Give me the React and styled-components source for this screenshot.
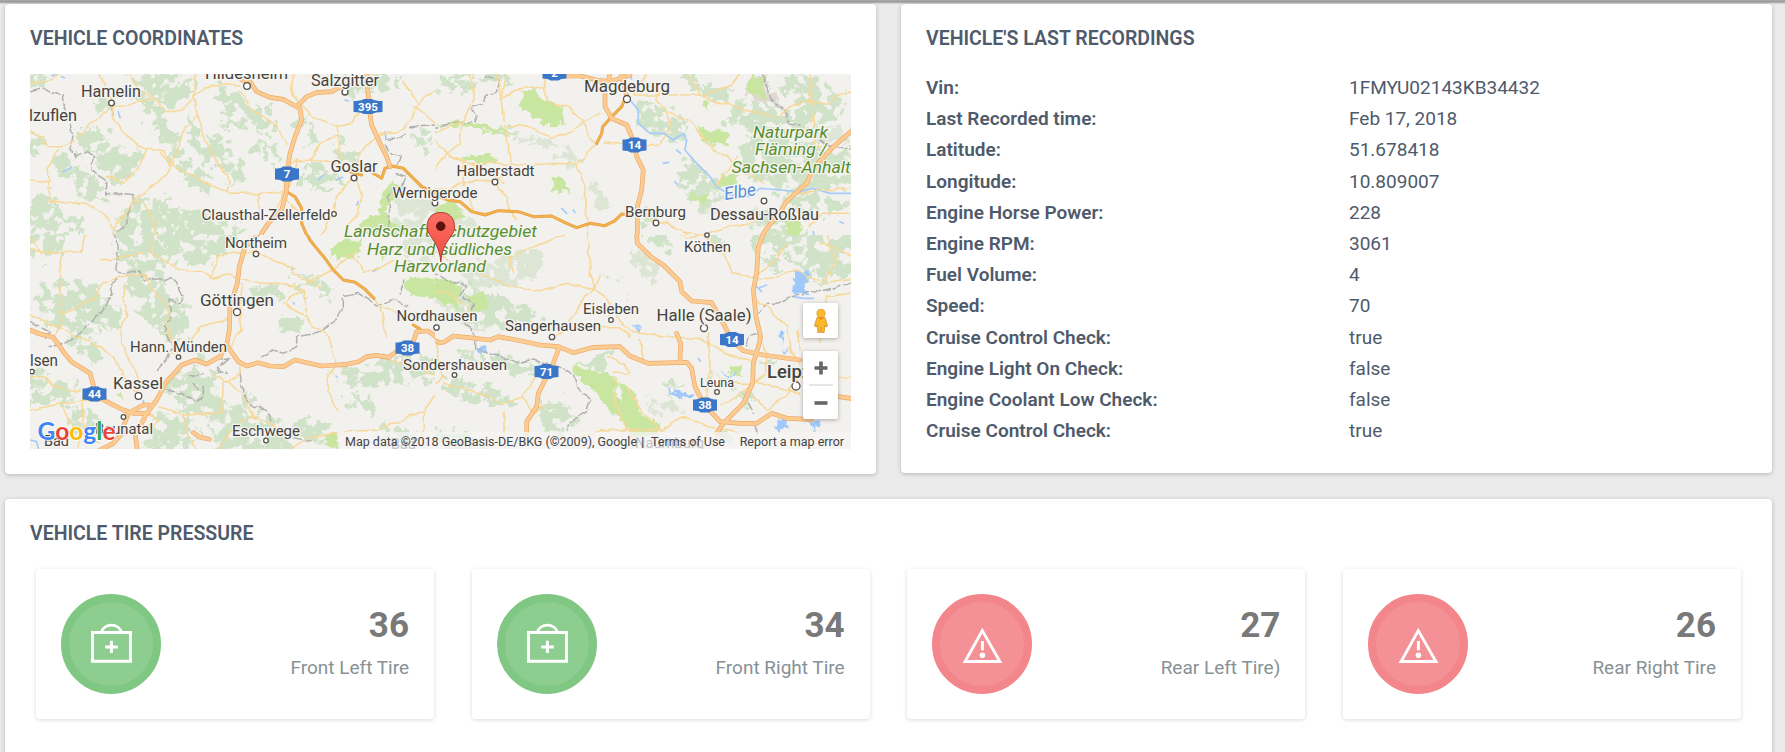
import React from "react";
import styled, { createGlobalStyle } from "styled-components";

const GlobalStyle = createGlobalStyle`
  * { box-sizing: border-box; }
  html, body { margin: 0; padding: 0; height: 100%; overflow: hidden; }
  body {
    background: #eaeaea;
    color: #4f5a6b;
    font-family: Roboto, "Liberation Sans", sans-serif;
    font-size: 19px;
  }
`;

const Page = styled.main`
  height: 752px;
  overflow: hidden;
  display: flex;
  flex-direction: column;
`;

const HeaderEdge = styled.div`
  flex: none;
  height: 4px;
  background: linear-gradient(#a8a8a8 0 1px, #9b9b9b 1px 2px, #b3b3b3 2px 3px, #d2d2d2 3px 4px);
`;

const Content = styled.div`
  flex: 1;
  display: grid;
  grid-template-columns: 871px 871px;
  grid-template-rows: 470px 300px;
  gap: 25px;
  padding: 0 13px 0 5px;
  align-items: start;
`;

const Card = styled.section`
  grid-column: ${(p) => (p.$wide ? "1 / -1" : "auto")};
  width: ${(p) => (p.$wide ? "1767px" : "auto")};
  min-height: ${(p) => (p.$wide ? "300px" : "0")};
  padding: 25px;
  border-radius: 4px;
  background: #fff;
  box-shadow: 0 1px 4px rgba(0, 0, 0, 0.22);
`;

const Title = styled.h2`
  margin: 0 0 25px;
  font-size: 19.5px;
  line-height: 20px;
  font-weight: 600;
  text-transform: uppercase;
`;

const MapFrame = styled.div`
  position: relative;
  height: 375px;
  overflow: hidden;
  background: #f2f1ed;
`;

const MapSvg = styled.svg`
  display: block;
  font-family: Roboto, sans-serif;
`;

const MapControls = styled.div`
  position: absolute;
  top: 229px;
  right: 13px;
  display: flex;
  flex-direction: column;
  gap: 13px;
`;

const ControlBox = styled.div`
  width: 35px;
  height: ${(p) => p.$height}px;
  display: flex;
  flex-direction: column;
  align-items: center;
  justify-content: center;
  background: #fff;
  border-radius: 2px;
  box-shadow: 0 1px 4px rgba(0, 0, 0, 0.3);
`;

const ZoomKey = styled.div`
  height: 33px;
  display: flex;
  align-items: center;
`;

const ControlRule = styled.div`
  width: 24px;
  height: 2px;
  background: #e6e6e6;
`;

const Attribution = styled.div`
  position: absolute;
  right: 0;
  bottom: 0;
  width: 513px;
  height: 17px;
  padding: 2px 7px 0 7px;
  display: grid;
  grid-template-columns: 296px 10px 1fr auto;
  font-size: 12.5px;
  line-height: 15px;
  color: #444;
  white-space: pre;
  background: rgba(245, 245, 245, 0.72);
`;

const Record = styled.div`
  display: grid;
  grid-template-columns: 423px 1fr;
  height: 31.2px;
  line-height: 28px;
`;

const RecordLabel = styled.span`
  font-weight: 600;
`;

const Tires = styled.div`
  display: flex;
  justify-content: space-between;
  padding: 0 6px;
`;

const TireCard = styled.article`
  width: 398px;
  height: 150px;
  padding: 25px;
  display: flex;
  justify-content: space-between;
  border-radius: 4px;
  background: #fff;
  box-shadow: 0 1px 4px rgba(0, 0, 0, 0.15);
`;

const Badge = styled.div`
  width: 100px;
  height: 100px;
  border-radius: 50%;
  background: ${(p) => (p.$alert ? "#f39196" : "#8dcd8f")};
  border: 8px solid ${(p) => (p.$alert ? "#f3868b" : "#80c783")};

  svg {
    display: block;
    margin: -8px;
  }
`;

const Reading = styled.div`
  padding-top: 11px;
  text-align: right;
`;

const Value = styled.div`
  font-size: 35px;
  line-height: 42px;
  font-weight: 700;
  color: #797979;
`;

const Caption = styled.div`
  margin-top: 7px;
  line-height: 28px;
  color: #879196;
`;

const records = [
  ["Vin:", "1FMYU02143KB34432"],
  ["Last Recorded time:", "Feb 17, 2018"],
  ["Latitude:", "51.678418"],
  ["Longitude:", "10.809007"],
  ["Engine Horse Power:", "228"],
  ["Engine RPM:", "3061"],
  ["Fuel Volume:", "4"],
  ["Speed:", "70"],
  ["Cruise Control Check:", "true"],
  ["Engine Light On Check:", "false"],
  ["Engine Coolant Low Check:", "false"],
  ["Cruise Control Check:", "true"],
];

const tires = [
  { value: 36, name: "Front Left Tire", alert: false },
  { value: 34, name: "Front Right Tire", alert: false },
  { value: 27, name: "Rear Left Tire)", alert: true },
  { value: 26, name: "Rear Right Tire", alert: true },
];

/* Map artwork: four tiles, each drawn at three units per pixel. */
const tiles = [
  {
    at: [0, 0],
    forest: [
      "M400 222 L520 225 530 260 570 240 575 280 550 300 500 310 470 290 430 270Z",
      "M410 290 L450 300 480 340 500 380 540 410 520 430 480 400 440 350Z",
      "M570 360 L600 400 640 450 700 490 740 520 720 550 670 510 620 480 570 420Z",
      "M510 430 L540 450 580 500 640 540 620 570 570 550 520 490Z",
      "M650 260 L700 280 760 310 800 330 830 370 800 400 740 370 680 370 660 340 690 330 650 290Z",
      "M890 370 L920 350 950 410 920 430Z",
      "M180 450 L230 480 250 520 220 545 170 510Z",
      "M230 400 L290 380 330 400 310 440 370 450 430 460 400 520 350 550 300 500 260 440Z",
      "M280 310 L315 290 330 320 290 340Z",
      "M90 400 L130 430 120 460 90 470Z",
      "M90 600 L150 580 190 640 240 680 200 720 150 690 90 700Z",
      "M380 610 L460 590 520 610 540 660 560 720 380 720 350 690Z",
      "M520 640 L600 630 650 660 720 690 720 720 520 720Z",
      "M770 430 L830 440 840 480 790 480Z",
      "M1000 230 L1080 250 1110 280 1050 290Z",
      "M1240 400 L1280 400 1290 440 1250 440Z",
      "M1000 420 L1060 450 1080 490 1020 470Z",
      "M930 480 L990 500 1010 560 960 570 900 540Z",
      "M1120 222 L1200 240 1190 270 1140 260Z",
      "M90 230 L160 225 140 240 90 260Z",
      "M220 520 L290 540 310 590 270 600 230 570Z",
      "M640 420 L680 440 710 500 660 490Z",
    ],
    pale: ["M1160 600 L1250 570 1310 610 1310 720 1180 700Z"],
    park: ["M1150 570 L1180 540 1220 570 1160 620 1170 660 1230 690 1210 720 1090 700 1080 670 1140 640Z"],
    minor: [
      "M90 250 L150 240 180 222 M300 222 L335 310 340 350 380 410 430 445 490 455 520 495 560 520 620 550 690 580 780 580 860 575",
      "M90 395 L125 410 140 440 185 440 225 420 285 360 330 325 375 315 460 295 500 335 550 325 580 295 610 265 660 255 720 255",
      "M385 222 L420 270 460 295 M590 222 L585 300 595 345 545 400 535 450 515 495 500 525 430 580 395 605 375 640 345 680 340 720",
      "M595 345 L610 410 650 480 690 540 685 575 M720 270 L745 320 790 350 830 380 860 430",
      "M90 540 L150 545 140 500 180 450 M145 545 L150 600 200 610 260 610 305 635 340 680",
      "M880 222 L875 270 890 310 M900 310 L940 350 1010 380 1060 370 1090 310 M1010 380 L1020 420 1025 500 1050 520",
      "M1310 270 L1270 290 1230 360 1190 400 1140 400 M1240 320 L1310 370 M1210 240 L1255 310",
      "M870 485 L930 480 980 485 1030 500 M930 480 L960 430 1015 405 M1150 400 L1095 440 1060 500 1085 590 1075 640 1040 680",
      "M820 640 L870 555 890 480 M860 600 L900 640 M400 600 L430 610 450 640 470 720 M1050 540 L1010 590 1000 640 980 680 950 720",
      "M320 530 L370 545 420 500 435 450 M515 500 L480 460 M780 580 L780 640",
    ],
    trunk: ["M860 575 L885 590 905 625 905 670 920 705 935 725", "M1050 515 L1085 525 M1120 520 L1145 535 1155 505 1175 498 1210 505 1235 530 1265 560 1310 580"],
    highway: ["M725 240 L750 245 770 275 810 292 850 298 880 315 900 325 905 360 885 410 870 460 862 510 858 580 845 630 805 670 785 700 775 725", "M890 320 L920 290 950 278 995 275 1030 255", "M1100 222 L1108 330 1115 375 1140 430 1160 470 1170 500"],
    water: ["M190 515 L215 502", "M155 228 l10 -5 M185 230 l8 3 M335 325 l5 20 M355 335 l5 18", "M955 540 l15 -15 M1008 540 l20 -8", "M1035 300 l10 3 M1155 395 l3 25 M1075 605 l-5 10"],
    border: ["M95 275 L130 265 160 280 190 285 185 310 205 340 210 390 220 400 210 450 230 470 260 455 280 470 275 510 320 540 320 585 370 580 405 585 385 630 380 670 345 705 345 725", "M1230 380 L1315 378 M1160 415 L1200 415 1215 400 M1155 435 L1180 465 1205 470 1195 490 M1190 520 L1215 530 1205 560 1165 590 1170 640 1165 690"],
  },
  {
    at: [430, 0],
    forest: [
      "M0 225 L80 230 130 260 100 280 40 260 0 245Z",
      "M130 225 L210 222 240 240 180 250 150 240Z",
      "M620 310 L690 330 760 350 770 390 720 420 660 400 625 360Z",
      "M760 230 L830 250 900 270 880 300 800 280Z",
      "M930 300 L1040 320 1090 340 1130 300 1150 350 1110 410 1000 410 950 380 890 360Z",
      "M1060 230 L1180 240 1240 300 1220 350 1150 370 1120 300 1070 290Z",
      "M770 480 L810 500 850 550 880 580 860 620 790 610 760 560Z",
      "M950 420 L1100 410 1150 450 1260 450 1262 550 1150 570 1000 550 930 500Z",
      "M960 620 L1030 640 1100 650 1140 720 1020 720 980 680Z",
      "M1050 580 L1180 590 1240 620 1180 640 1060 620Z",
      "M200 400 L230 380 260 400Z M640 620 L660 650 640 680Z",
    ],
    pale: [
      "M260 400 L370 420 430 450 450 500 420 500 370 460 270 430Z",
      "M495 540 L520 570 540 610 500 620 470 580Z",
      "M780 500 L840 550 870 610 820 640 760 590Z",
      "M0 620 L90 630 170 680 260 690 200 720 0 720Z",
      "M1150 380 L1260 390 1262 430 1150 430Z",
    ],
    park: [
      "M275 270 L310 270 350 310 400 320 400 380 330 370 310 350 275 335Z",
      "M0 375 L60 368 130 365 210 388 260 400 180 400 120 380Z",
      "M90 465 L170 465 210 480 170 490 100 485Z",
      "M360 570 L375 540 400 540 420 575Z",
      "M805 380 L840 390 900 400 890 435 820 425Z",
      "M870 520 L925 525 915 560 870 560Z",
      "M770 580 L830 590 830 620Z",
      "M1060 660 L1110 670 1100 720 1070 720Z",
      "M960 225 L1000 230 1010 300 950 280Z",
      "M815 300 L840 305 830 330Z",
      "M0 620 L70 610 110 650 50 670 0 690Z",
    ],
    urban: ["M945 235 L1010 225 1040 310 1000 315 960 280Z"],
    minor: [
      "M0 400 L90 370 M95 370 L90 430 50 460 0 405 M50 460 L100 490 100 560 M0 580 L20 500 50 460 M100 490 L240 490 M225 550 L160 510 50 460",
      "M120 222 L130 300 95 370 M200 222 L215 310 225 380 245 490 195 550 140 540 90 550 40 580",
      "M225 380 L290 380 370 415 420 395 460 365 510 340 M460 365 L470 400 500 430 440 495 380 490 280 495 245 490",
      "M215 295 L260 270 340 260 350 300 410 320 460 360 M350 222 L345 260 M520 430 L570 432 600 420 M650 438 L690 435 720 370 710 330 680 300 690 270",
      "M650 222 L610 285 815 285 900 260 930 222 M770 222 L815 285 840 300 920 320 1000 345 1050 350 1080 320 1140 300 1190 310 1262 270",
      "M720 340 L780 365 830 430 890 470 950 520 1000 550 M1140 222 L1145 300 1155 380 1150 440 1190 430",
      "M440 495 L465 560 470 640 470 720 M0 560 L110 580 140 640 180 640 M195 550 L230 590 245 640 260 660",
      "M660 660 L710 670 760 700 830 705 M830 705 L900 680 1000 660 M1090 580 L1190 570 1262 565 M920 470 L900 500 860 560",
      "M450 720 L400 710 370 720 M1140 680 L1180 640 1262 640 M760 700 L790 720 M225 222 L215 290",
    ],
    trunk: ["M590 285 L575 320 545 350 518 380 515 400 500 430", "M0 580 L55 600 90 605 125 635 165 645 205 632 265 635 310 650 365 648 405 668 440 683 480 670 525 677 555 662 575 642 600 645"],
    highway: ["M540 222 L525 280 525 320 545 355 590 375 610 420 620 470 640 510 635 570 622 620 622 700 618 720", "M410 228 L450 228 500 240 540 245 600 225 M575 222 L590 290", "M1262 395 L1210 440 1150 505 1130 550 1095 580 1065 610 1050 640 1010 685 990 720"],
    water: ["M600 300 L625 330 625 370 660 400 700 400 730 420 760 400 770 420 765 450 800 490 840 530 860 560 900 585 960 590 990 565 1050 570 1110 575 1150 565 1200 580 1262 580", "M600 222 l5 15 M740 450 l12 10 M700 490 l15 -3 M735 545 l8 10", "M395 625 l15 15 M430 630 l5 8 M1150 695 l3 25 M1230 665 l10 5"],
    border: ["M170 230 L205 240 200 275 170 290 155 310 125 320 130 335 145 345 135 368 80 368 30 378 0 378", "M995 225 L1010 250 1030 310 1060 330 1080 370 1110 375 M1170 415 L1200 440 1262 450"],
  },
  {
    at: [0, 230],
    forest: [
      "M90 0 L190 0 180 50 140 90 90 60Z",
      "M370 -15 L560 -10 640 20 660 60 620 100 500 90 440 70 360 90 350 20Z",
      "M560 0 L700 10 680 70 640 60Z",
      "M380 100 L470 90 480 160 520 200 560 230 550 330 500 340 490 290 430 270 410 200 380 150Z",
      "M120 170 L210 160 300 180 300 220 200 240 230 280 170 290 110 230Z",
      "M240 230 L350 220 350 290 260 310 200 340Z",
      "M540 420 L620 430 650 480 640 540 560 550 520 500 500 450Z",
      "M230 340 L290 350 310 380 240 370Z",
      "M90 430 L170 450 230 470 200 510 90 520Z",
      "M450 560 L560 560 590 600 560 657 460 657 430 620Z",
      "M620 500 L700 530 770 560 790 657 650 657Z",
      "M770 560 L830 570 860 657 780 657Z",
      "M980 410 L1080 420 1130 400 1240 380 1310 400 1310 440 1200 450 1080 470 1020 440Z",
      "M1050 490 L1120 520 1100 540 1040 520Z",
      "M860 250 L920 270 880 310 840 290Z",
      "M880 130 L960 150 1000 190 980 200 900 170Z",
      "M740 180 L840 170 840 200 760 210Z",
      "M200 530 L270 540 300 580 220 600Z",
      "M880 570 L970 590 980 640 900 620Z",
      "M1140 600 L1210 590 1230 620 1150 630Z",
      "M600 360 L640 380 600 400Z M730 480 L760 500 740 530Z",
    ],
    pale: ["M1200 20 L1310 10 1310 90 1230 100Z"],
    park: ["M990 60 L1040 25 1090 30 1080 70 1010 100Z", "M1130 50 L1160 60 1150 100Z", "M1205 160 L1240 140 1310 145 1310 205 1260 200 1215 180Z", "M975 610 L1015 605 1015 655 980 650Z", "M350 490 L370 480 370 505Z"],
    minor: [
      "M90 60 L150 70 240 65 260 0 M180 60 L185 280 160 320 M190 250 L280 210 310 160 360 140 M90 255 L210 310 290 345 340 380 370 440 410 490",
      "M360 295 L375 370 410 430 430 480 M375 160 L370 220 385 260 360 295 M360 140 L430 130 460 180 500 230 510 260 490 280 540 370",
      "M90 440 L130 440 160 470 200 480 240 480 M90 540 L190 520 250 510 320 515 M245 490 L250 600 230 657 M180 530 L230 600 300 640",
      "M460 0 L450 60 500 100 540 120 610 125 640 145 690 130 720 145 780 160 860 160 910 180 920 250 940 290 980 310 1000 380 1010 405",
      "M860 220 L890 250 920 260 M630 145 L660 75 700 70 770 65 M770 70 L850 100 900 140 960 170 M520 370 L580 330 600 290 690 265",
      "M725 160 L720 300 690 360 M915 165 L1000 120 1070 60 M640 430 L680 460 720 430 720 400 M690 455 L740 510 760 560 M670 460 L665 550 550 555 480 530",
      "M550 560 L560 600 590 657 M870 657 L930 620 1010 607 1130 600 1200 575 1270 540 1310 490 M1010 410 L980 440 990 500 1010 540",
      "M650 657 L700 590 760 560 830 590 M1120 200 L1140 230 1180 240 1210 270 M1060 80 L1100 130 1180 90 M1270 540 L1270 630 M1320 440 L1240 410 1170 390",
      "M850 220 L870 200 910 180 M90 20 L120 70 M300 90 L370 80 430 70 M440 550 L480 570 450 600 M1140 230 L1160 320",
    ],
    trunk: ["M915 0 L930 30 950 55 975 85 1000 120 1030 150 1065 157 1095 178 1122 205", "M1240 285 L1260 297"],
    highway: ["M790 -10 L760 30 735 50 718 110 712 160 690 230 688 300 680 345 715 395 740 408 775 398 810 408 850 410 885 390 965 408 1040 403 1075 395 1100 380 1130 376 1165 382 1190 365 1215 350 1240 335 1250 305 1285 303 1325 335", "M680 345 L660 380 620 402 585 390 545 405 500 455 470 510 440 550 425 580", "M90 300 L120 312 160 322 190 365 215 395 270 430 280 465 285 490 320 515 370 540 400 550 445 550", "M430 525 L385 550 370 590 M430 525 L455 525 M375 600 L340 640 300 660 M405 610 L412 660", "M580 608 L600 622 628 628"],
    water: ["M90 630 l20 5 5 20 M1120 125 l15 -10 M880 218 l3 4 M1008 438 l3 3 M430 512 l2 8"],
    border: ["M345 0 L355 80 345 125 370 130 420 120 430 150 490 150 510 140 530 160 550 200 540 220 510 210 515 260 490 290 520 350 500 390 470 420", "M350 150 L330 165 335 190 310 240 240 310 200 335 150 350 M95 275 L130 295 150 300 140 325", "M780 380 L820 360 850 370 890 350 890 320 950 310 1010 270 1030 230 1030 200 1075 190 1130 225 1180 210 1220 230 M1200 190 L1215 150", "M570 440 L610 430 M580 460 L595 480 M500 480 L545 490 590 515 610 495 610 470 M665 390 L690 385 660 410 660 430 680 430", "M720 430 L730 490 760 530 800 540 820 580 M880 620 L930 632"],
  },
  {
    at: [430, 230],
    forest: [
      "M60 170 L160 180 250 220 330 260 280 290 200 280 140 260 110 240Z",
      "M40 440 L120 450 190 480 240 495 220 520 120 510 50 480Z",
      "M100 370 L210 375 280 400 370 420 380 450 300 440 210 400 120 390Z",
      "M320 520 L390 510 430 560 400 600 350 600Z",
      "M950 0 L1262 0 1262 120 1180 160 1120 150 1080 60 970 50Z",
      "M930 480 L960 470 980 500 940 520Z",
      "M640 0 L690 20 720 60 680 50Z",
      "M470 410 L540 360 520 400Z M700 460 L760 470 740 480Z",
      "M0 600 L120 620 160 657 0 657Z",
      "M980 400 L1040 390 1030 410Z M870 600 L920 640 900 657Z",
      "M1000 90 L1050 80 1040 130Z M850 20 L880 10 870 40Z",
    ],
    pale: [
      "M90 130 L240 60 310 50 350 70 340 120 250 170 120 190Z",
      "M600 60 L660 70 680 110 670 170 600 100Z",
      "M510 140 L580 135 570 150Z M580 170 L600 190 590 200Z",
      "M660 510 L740 500 760 530 720 550 670 540Z",
      "M0 190 L140 240 200 280 150 310 60 260Z M840 430 L930 450 900 480Z",
    ],
    park: [
      "M0 145 L60 150 90 170 80 210 90 240 0 205Z",
      "M110 200 L160 185 175 235 140 245Z",
      "M430 400 L450 400 480 425 540 430 560 450 550 500 600 520 630 550 690 580 680 610 590 620 600 590 550 555 500 490 440 440Z",
      "M560 450 L590 470 620 500 630 550 580 520Z",
      "M900 410 L935 415 930 440 900 430Z M630 0 L645 10 635 25Z",
      "M1070 0 L1110 0 1085 20Z",
    ],
    minor: [
      "M0 60 L60 90 150 130 240 170 320 185 410 160 490 175 525 200 560 260 600 300 700 320 800 325",
      "M470 0 L475 60 480 120 490 175 465 200 430 260 390 310 M250 130 L240 80 310 50 450 0",
      "M510 130 L490 175 M0 490 L40 440 30 400 20 340 M40 460 L150 490 220 520 280 500 320 430 M225 545 L225 657",
      "M280 500 L310 550 340 530 M380 310 L440 290 570 290 600 320 M550 430 L600 430 580 400 530 380",
      "M555 440 L555 520 590 600 560 657 M450 620 L520 600 590 600 700 600 760 560 840 590 930 610",
      "M590 470 L630 540 690 600 M835 310 L840 400 830 500 800 510 M800 325 L860 350 900 380 970 395",
      "M830 20 L880 70 910 130 970 145 M980 215 L1020 235 1070 290 1080 360 1110 400 M960 145 L1040 140 1100 120 1180 160 1262 145",
      "M1190 0 L1200 60 1220 90 1180 160 M1262 80 L1230 60 1170 40 M980 320 L1010 370 1010 430 960 460 890 460",
      "M970 450 L1040 470 1110 490 M970 500 L1010 540 1060 500 1110 440 M1225 445 L1262 445 M870 530 L960 470 1010 430",
      "M1100 300 L1110 360 M730 0 L770 20 830 15 M970 145 L1040 90 1070 40 M630 330 L640 390 M0 180 L60 190 120 240",
      "M1170 340 L1190 200 1262 190",
    ],
    highway: ["M618 -10 L622 40 665 82 700 105 750 155 755 185 785 213 845 218 880 280 905 330 940 362 1000 375 1110 390", "M0 325 L30 338 45 335 70 318 110 322 180 330 205 320 260 330 330 345 385 350 430 368 490 352 570 350 600 378 655 400 770 397 785 415 795 470 820 520 870 575 930 580 980 580 1025 550 1070 565 1145 568", "M740 310 L752 340 750 395", "M388 350 L370 400 350 440 325 490 320 530 290 575 290 610", "M1005 0 L985 50 980 130 970 180 978 260 992 320 985 350 970 400 968 460 940 520 880 580 860 610", "M1225 500 L1262 505 1290 520"],
    trunk: [],
    lake: ["M1080 150 L1095 140 1090 122 1110 120 1135 130 1135 160 1120 165 1125 190 1100 195 1090 175Z", "M715 475 L760 490 790 490 785 510 740 500Z", "M145 355 L170 350 175 365 155 372Z", "M1030 590 L1060 560 1080 590 1050 600 1040 610Z", "M875 420 L900 440 910 425 915 435 890 445Z", "M600 285 L640 300 620 302Z", "M1045 305 L1065 310 1060 335Z", "M1140 575 L1170 575 1150 600Z", "M1065 360 L1080 350 1075 365Z"],
    water: ["M1090 200 l30 5 30 0 M985 175 l25 -10 M805 385 l5 8 M975 165 l20 20 M735 480 l20 25"],
    border: ["M0 130 L60 155 110 165 90 200 130 220 110 280 140 320 140 360 210 380 270 400 310 390 390 415 430 430 440 470 480 510 470 545 420 575 415 600", "M1262 155 L1220 175 1170 185 1130 180 1120 195 1080 200 1040 220 1010 220 985 250 M985 310 L960 315 950 345 M955 520 L970 550 M975 590 L985 610"],
  },
];

/* text, x, baseline, size, width */
const towns = [
  ["Hildesheim", 205, 78.5, 16, 83],
  ["Salzgitter", 311, 86, 16, 68],
  ["Hamelin", 81, 96.5, 16, 60],
  ["lzuflen", 29, 121, 16, 48],
  ["Goslar", 330.5, 171.5, 16, 47],
  ["Clausthal-Zellerfeld", 201.5, 219.5, 15, 129],
  ["Wernigerode", 392.5, 198, 15, 85],
  ["Magdeburg", 584, 91.5, 17, 86],
  ["Halberstadt", 456.5, 176, 15, 78],
  ["Bernburg", 625, 217, 15.5, 61],
  ["Dessau-Roßlau", 710, 219.5, 16, 109],
  ["Northeim", 225, 248, 15.5, 62],
  ["Göttingen", 200, 305.5, 17, 74],
  ["Hann. Münden", 130, 351.5, 15, 97],
  ["lsen", 30, 366, 16, 28],
  ["Kassel", 113, 388.5, 17, 50],
  ["Eschwege", 232, 435.5, 15, 68],
  ["Baunatal", 95, 434, 15, 58],
  ["Bad", 44, 445.5, 15, 25],
  ["Bad", 391, 448.5, 15, 25],
  ["Köthen", 684, 252, 15, 47],
  ["Nordhausen", 396.5, 321, 15, 81],
  ["Sangerhausen", 505, 330.5, 15, 96],
  ["Eisleben", 583, 314, 15, 56],
  ["Halle (Saale)", 656.5, 321, 17, 95],
  ["Sondershausen", 403, 369.5, 15, 104],
  ["Leuna", 700, 387, 13, 34],
  ["Leipzig", 767, 377.5, 18.5, 59, 500],
  ["Naumburg", 635, 448, 15, 69],
];

const dots = [
  [247, 86, 3.3], [345, 92, 3], [111.5, 103, 2.8], [354, 178, 2.8], [334, 214, 2.3], [435, 203, 2.8],
  [627, 99, 3.5], [495, 182, 2.8], [656, 223, 2.8], [764, 201, 2.8], [707, 235, 2.2], [256, 254, 2.7],
  [237, 312, 3.5], [178.5, 357, 2.2], [32, 371.5, 2.2], [138.5, 396, 3.3], [123.5, 417, 2.3], [266, 440.5, 2.3],
  [436.5, 327.5, 2.7], [552, 337, 2.7], [611, 320, 2.3], [704, 328, 3.5], [454.5, 375, 2.3], [717, 392, 2.3],
  [796, 386, 4],
];

const shields = [
  ["395", 368, 106.5, 29], ["7", 287, 174, 24], ["2", 554.5, 73, 24], ["14", 634.5, 145, 24],
  ["44", 94.5, 394, 24], ["38", 407.5, 348, 24], ["71", 546.5, 371.5, 24], ["14", 732, 339.5, 24], ["38", 705, 405, 24],
];

const parks = [
  ["Landschaftsschutzgebiet", 344, 237, 193], ["Harz und südliches", 367, 255, 145], ["Harzvorland", 394, 272, 92],
  ["Naturpark", 753, 138, 75], ["Fläming /", 755, 155, 72], ["Sachsen-Anhalt", 731.5, 173, 119],
];

const join = (list) => (list || []).join(" ");

function Tile({ tile }) {
  return (
    <g transform={`translate(${tile.at[0]} ${tile.at[1]}) scale(0.33333)`} fill="none" strokeLinejoin="round" strokeLinecap="round">
      <g filter="url(#ragged)">
        <path d={join(tile.pale)} fill="#dde6d5" />
        <path d={join(tile.urban)} fill="#dfd9d0" />
        <path d={join(tile.forest)} fill="#d0e3c8" stroke="#d0e3c8" strokeWidth="12" />
      </g>
      <g filter="url(#soft)">
        <path d={join(tile.park)} fill="#c9e6a0" />
        <path d={join(tile.lake)} fill="#a0c8fa" />
      </g>
      <path d={join(tile.water)} stroke="#a6cbfa" strokeWidth="5" />
      <path d={join(tile.border)} stroke="#b0b0ae" strokeWidth="4.5" strokeDasharray="24 9" filter="url(#wobble)" />
      <path d={join(tile.minor)} stroke="#f8d898" strokeWidth="4.6" filter="url(#wobble)" />
      <path d={join(tile.trunk)} stroke="#e39a35" strokeWidth="9" />
      <path d={join(tile.trunk)} stroke="#f3b04f" strokeWidth="6" />
      <path d={join(tile.highway)} stroke="#eda968" strokeWidth="14" />
      <path d={join(tile.highway)} stroke="#fccb92" strokeWidth="10" />
    </g>
  );
}

function VehicleMap() {
  return (
    <MapSvg width="821" height="375" viewBox="30 74 821 375">
      <defs>
        <filter id="ragged" x="-5%" y="-5%" width="110%" height="110%" colorInterpolationFilters="sRGB">
          <feTurbulence type="fractalNoise" baseFrequency="0.03" numOctaves="4" seed="7" result="n" />
          <feDisplacementMap in="SourceGraphic" in2="n" scale="75" xChannelSelector="R" yChannelSelector="G" result="d" />
          <feColorMatrix in="n" type="matrix" values="0 0 0 0 0  0 0 0 0 0  0 0 0 0 0  0 0 18 0 -7" result="holes" />
          <feComposite in="d" in2="holes" operator="in" />
        </filter>
        <filter id="soft" x="-5%" y="-5%" width="110%" height="110%" colorInterpolationFilters="sRGB">
          <feTurbulence type="fractalNoise" baseFrequency="0.04" numOctaves="3" seed="3" result="n" />
          <feDisplacementMap in="SourceGraphic" in2="n" scale="36" xChannelSelector="R" yChannelSelector="G" />
        </filter>
        <filter id="wobble" x="-5%" y="-5%" width="110%" height="110%" colorInterpolationFilters="sRGB">
          <feTurbulence type="fractalNoise" baseFrequency="0.025" numOctaves="2" seed="5" result="n" />
          <feDisplacementMap in="SourceGraphic" in2="n" scale="18" xChannelSelector="R" yChannelSelector="G" />
        </filter>
        <linearGradient id="pin" x1="0" y1="0" x2="0" y2="1">
          <stop offset="0" stopColor="#fb7064" />
          <stop offset="1" stopColor="#f24a3e" />
        </linearGradient>
        {tiles.map((t, i) => (
          <clipPath id={`tile${i}`} key={i}>
            <rect x={t.at[0] ? 435 : 0} y={t.at[1] ? 235 : 0} width={t.at[0] ? 450 : 435} height={t.at[1] ? 230 : 235} />
          </clipPath>
        ))}
      </defs>
      <rect x="30" y="74" width="821" height="375" fill="#f2f1ed" />
      {tiles.map((t, i) => (
        <g clipPath={`url(#tile${i})`} key={i}><Tile tile={t} /></g>
      ))}
      {dots.map(([x, y, r]) => (
        <circle key={`${x}-${y}`} cx={x} cy={y} r={r} fill="#fff" stroke="#55524c" strokeWidth="1.3" />
      ))}
      {shields.map(([n, x, y, w], i) => (
        <g key={i}>
          <path d={`M${x - w / 2} ${y - 5.5} Q${x - w / 4} ${y - 5.5} ${x - 4} ${y - 7.5} H${x + 4} Q${x + w / 4} ${y - 5.5} ${x + w / 2} ${y - 5.5} V${y + 5.5} Q${x + w / 4} ${y + 5.5} ${x + 4} ${y + 7.5} H${x - 4} Q${x - w / 4} ${y + 5.5} ${x - w / 2} ${y + 5.5}Z`} fill="#3b76c8" />
          <text x={x} y={y + 4} textAnchor="middle" fontSize="11.5" fontWeight="700" fill="#fff">{n}</text>
        </g>
      ))}
      <g stroke="#f5f4f0" strokeWidth="2.6" strokeLinejoin="round" paintOrder="stroke" fill="#45433e">
        {towns.map(([n, x, y, s, w, weight]) => (
          <text key={`${n}${x}`} x={x} y={y} fontSize={s} textLength={w} fontWeight={weight || 400} lengthAdjust="spacingAndGlyphs">{n}</text>
        ))}
        <g fill="#578f2e" fontStyle="italic" fontSize="16.5">
          {parks.map(([n, x, y, w]) => (
            <text key={n} x={x} y={y} textLength={w} lengthAdjust="spacingAndGlyphs">{n}</text>
          ))}
        </g>
        <text transform="translate(725 200) rotate(-9)" fill="#5a8fdc" fontStyle="italic" fontSize="17.5" textLength="32">Elbe</text>
      </g>
      <path d="M440.8 262 C440 248 434 241 429.5 234.5 C424.5 227 427 212.5 440.8 212.5 C454.6 212.5 457.1 227 452.1 234.5 C447.6 241 441.6 248 440.8 262Z" fill="url(#pin)" stroke="#a83a33" strokeWidth="1" />
      <circle cx="440.7" cy="226.3" r="4.7" fill="#5c110d" />
      <text x="37.5" y="440" fontFamily="Lato, sans-serif" fontSize="25" fontWeight="700" textLength="78" lengthAdjust="spacingAndGlyphs" stroke="#fff" strokeWidth="1.6" paintOrder="stroke">
        <tspan fill="#4285f4">G</tspan><tspan fill="#ea4335">o</tspan><tspan fill="#fbbc05">o</tspan><tspan fill="#4285f4">g</tspan><tspan fill="#34a853">l</tspan><tspan fill="#ea4335">e</tspan>
      </text>
    </MapSvg>
  );
}

function Pegman() {
  return (
    <svg width="16" height="26" viewBox="0 0 16 26">
      <path d="M4 9.5 H12 L14.6 18 L12.8 19 L11.7 17 L11.2 24.5 H8.6 L8 19 L7.4 24.5 H4.8 L4.3 17 L3.2 19 L1.4 18Z" fill="#fbb829" stroke="#d9902a" strokeWidth="0.8" />
      <path d="M5.5 9.5 L8 12 L10.5 9.5Z" fill="#e8832a" />
      <circle cx="8" cy="5.4" r="4.1" fill="#fcba2c" stroke="#d9992f" strokeWidth="0.8" />
    </svg>
  );
}

function ZoomGlyph({ plus }) {
  return (
    <svg width="14" height="14" viewBox="0 0 14 14" stroke="#666" strokeWidth="3.6">
      <path d={plus ? "M0.5 7 H13.5 M7 0.5 V13.5" : "M0.5 7 H13.5"} />
    </svg>
  );
}

function StatusIcon({ alert }) {
  return (
    <svg width="100" height="100" viewBox="0 0 100 100" fill="none" stroke="#fff" strokeWidth="3">
      {alert ? (
        <>
          <path d="M50.3 36.6 L33.1 67.5 H67.9Z" strokeWidth="2.9" />
          <path d="M50.4 47 V56.3" />
          <circle cx="50.4" cy="61.3" r="2.8" fill="#fff" stroke="none" />
        </>
      ) : (
        <>
          <path d="M31.5 38.5 H69.5 V67.3 H31.5Z M50.4 46.8 V59 M44.2 53 H56.8" />
          <path d="M40 39 C42.8 28.5 58 28.5 60.8 39" strokeWidth="2.8" />
        </>
      )}
    </svg>
  );
}

export default function App() {
  return (
    <>
      <GlobalStyle />
      <Page>
        <HeaderEdge />
        <Content>
          <Card>
            <Title>Vehicle Coordinates</Title>
            <MapFrame>
              <VehicleMap />
              <Attribution>
                <span>Map data ©2018 GeoBasis-DE/BKG (©2009), Google</span>
                <span>|</span>
                <span>Terms of Use</span>
                <span>Report a map error</span>
              </Attribution>
              <MapControls>
                <ControlBox $height={35}><Pegman /></ControlBox>
                <ControlBox $height={68}>
                  <ZoomKey><ZoomGlyph plus /></ZoomKey>
                  <ControlRule />
                  <ZoomKey><ZoomGlyph /></ZoomKey>
                </ControlBox>
              </MapControls>
            </MapFrame>
          </Card>
          <Card>
            <Title>Vehicle's Last Recordings</Title>
            {records.map(([label, value], i) => (
              <Record key={i}>
                <RecordLabel>{label}</RecordLabel>
                <span>{value}</span>
              </Record>
            ))}
          </Card>
          <Card $wide>
            <Title>Vehicle Tire Pressure</Title>
            <Tires>
              {tires.map((t) => (
                <TireCard key={t.name}>
                  <Badge $alert={t.alert}><StatusIcon alert={t.alert} /></Badge>
                  <Reading>
                    <Value>{t.value}</Value>
                    <Caption>{t.name}</Caption>
                  </Reading>
                </TireCard>
              ))}
            </Tires>
          </Card>
        </Content>
      </Page>
    </>
  );
}
